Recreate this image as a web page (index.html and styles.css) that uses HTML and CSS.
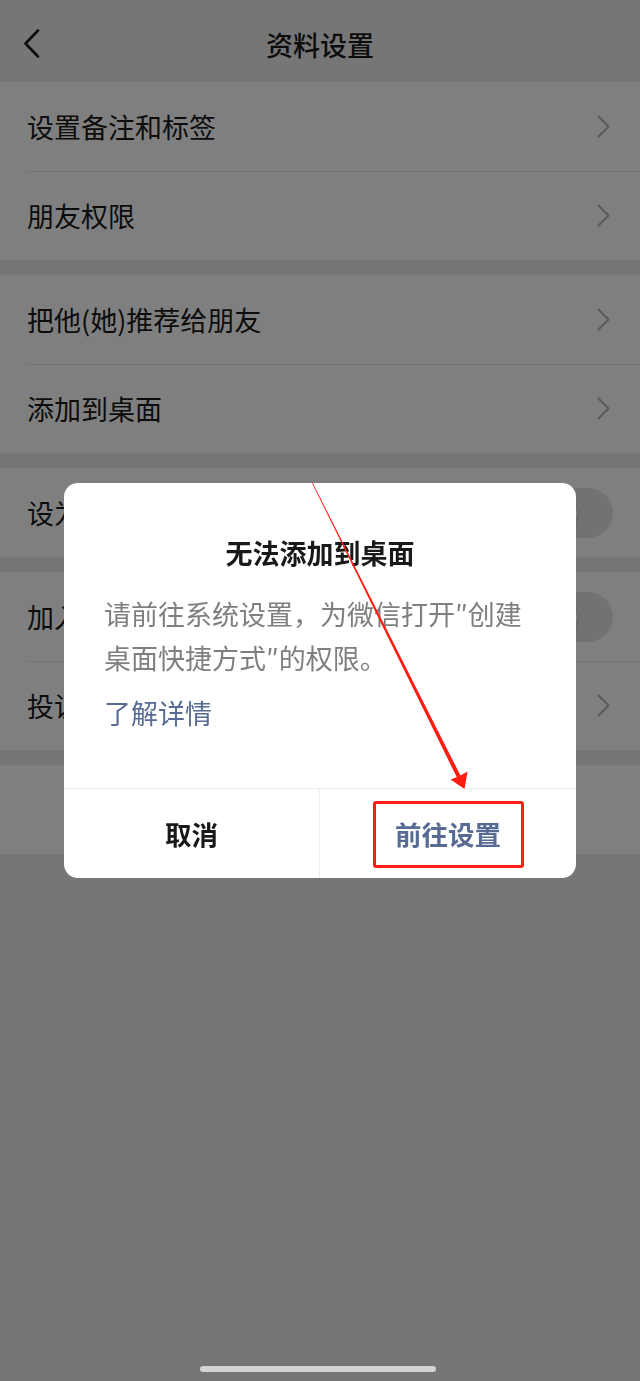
FILE: index.html
```html
<!DOCTYPE html>
<html lang="zh-CN">
<head>
<meta charset="utf-8">
<title>资料设置</title>
<link rel="stylesheet" href="styles.css">
</head>
<body>
<div class="page">
  <header class="nav">
    <svg class="nav-back" width="18" height="30" viewBox="0 0 18 30"><polyline points="15,1.5 2.5,14.5 15,27.5" fill="none" stroke="#191919" stroke-width="2.6" stroke-linecap="round" stroke-linejoin="round"/></svg>
    <h1 class="nav-title">资料设置</h1>
  </header>

  <section class="group">
    <div class="row"><span class="row-label">设置备注和标签</span><svg class="chev" width="13" height="23" viewBox="0 0 13 23"><polyline points="1.5,1.5 11.5,11.5 1.5,21.5"/></svg></div>
    <div class="row"><span class="row-label">朋友权限</span><svg class="chev" width="13" height="23" viewBox="0 0 13 23"><polyline points="1.5,1.5 11.5,11.5 1.5,21.5"/></svg></div>
  </section>

  <section class="group">
    <div class="row"><span class="row-label">把他(她)推荐给朋友</span><svg class="chev" width="13" height="23" viewBox="0 0 13 23"><polyline points="1.5,1.5 11.5,11.5 1.5,21.5"/></svg></div>
    <div class="row"><span class="row-label">添加到桌面</span><svg class="chev" width="13" height="23" viewBox="0 0 13 23"><polyline points="1.5,1.5 11.5,11.5 1.5,21.5"/></svg></div>
  </section>

  <section class="group">
    <div class="row"><span class="row-label">设为星标朋友</span><span class="switch"><span class="knob"></span></span></div>
  </section>

  <section class="group">
    <div class="row"><span class="row-label">加入黑名单</span><span class="switch"><span class="knob"></span></span></div>
    <div class="row"><span class="row-label">投诉</span><svg class="chev" width="13" height="23" viewBox="0 0 13 23"><polyline points="1.5,1.5 11.5,11.5 1.5,21.5"/></svg></div>
  </section>

  <section class="group">
    <div class="row row-danger"><span class="danger-label">删除</span></div>
  </section>
</div>

<div class="mask">
  <div class="dialog">
    <h2 class="dialog-title">无法添加到桌面</h2>
    <p class="dialog-text">请前往系统设置，为微信打开″创建桌面快捷方式″的权限。</p>
    <a class="dialog-link">了解详情</a>
    <div class="dialog-actions">
      <button class="btn btn-cancel">取消</button>
      <button class="btn btn-confirm">前往设置<span class="mark-box"></span></button>
    </div>
  </div>
</div>

<svg class="annot" width="640" height="1381" viewBox="0 0 640 1381">
  <polygon points="312.0,483 312.8,483 461.0,776.6 457.4,778.4" fill="#ff1c12"/>
  <polygon points="464.5,789 450.5,779.5 458.2,776.8 467.6,771.5" fill="#ff1c12"/>
</svg>

<div class="home-indicator"></div>
</body>
</html>
```

FILE: styles.css
```css
html, body {
  margin: 0;
  padding: 0;
}

body {
  width: 640px;
  height: 1381px;
  background: #ededed;
  font-family: "Noto Sans CJK SC", "Noto Sans", sans-serif;
  color: #191919;
  overflow: hidden;
}

.page {
  display: flex;
  flex-direction: column;
}

/* top navigation */
.nav {
  height: 82px;
  box-sizing: border-box;
  padding-top: 6px;
  display: flex;
  align-items: center;
  justify-content: center;
  position: relative;
  background: #ededed;
}

.nav-back {
  position: absolute;
  left: 23px;
  top: 29px;
}

.nav-title {
  margin: 0;
  font-size: 27px;
  font-weight: 500;
  line-height: 1;
}

/* list groups */
.group {
  background: #ffffff;
  margin-bottom: 15px;
}

.row {
  height: 89px;
  box-sizing: border-box;
  padding: 0 27px;
  display: flex;
  align-items: center;
  justify-content: space-between;
  position: relative;
}

.row + .row::before {
  content: "";
  position: absolute;
  left: 27px;
  right: 0;
  top: 0;
  height: 1px;
  background: #e6e6e6;
}

.row-label {
  font-size: 27px;
  line-height: 1;
}

.chev {
  display: block;
  margin-right: 3px;
}

.chev polyline {
  fill: none;
  stroke: #b2b2b2;
  stroke-width: 2;
  stroke-linecap: round;
  stroke-linejoin: round;
}

.switch {
  width: 84px;
  height: 50px;
  border-radius: 25px;
  background: #e5e5e5;
  position: relative;
  display: block;
}

.knob {
  position: absolute;
  left: 2px;
  top: 2px;
  width: 46px;
  height: 46px;
  border-radius: 50%;
  background: #ffffff;
  box-shadow: 0 2px 4px rgba(0, 0, 0, 0.15);
}

.row-danger {
  justify-content: center;
}

.danger-label {
  color: #fa5151;
  font-size: 27px;
  font-weight: 600;
}

/* modal */
.mask {
  position: fixed;
  inset: 0;
  background: rgba(0, 0, 0, 0.5);
  display: flex;
  justify-content: center;
  align-items: flex-start;
  padding-top: 483px;
  box-sizing: border-box;
}

.dialog {
  width: 512px;
  background: #ffffff;
  border-radius: 14px;
  display: flex;
  flex-direction: column;
  overflow: hidden;
}

.dialog-title {
  margin: 52px 0 0;
  font-size: 27px;
  font-weight: 700;
  line-height: 36px;
  text-align: center;
  color: #191919;
}

.dialog-text {
  margin: 21px 0 0;
  padding: 0 40px;
  font-size: 27px;
  line-height: 44px;
  color: #7f7f7f;
}

.dialog-link {
  margin: 11px 40px 53px;
  font-size: 27px;
  line-height: 44px;
  color: #576b95;
}

.dialog-actions {
  display: grid;
  grid-template-columns: 1fr 1fr;
  border-top: 1px solid #ececec;
  height: 90px;
  box-sizing: border-box;
}

.btn {
  border: 0;
  background: transparent;
  font-family: inherit;
  font-size: 26.5px;
  font-weight: 600;
  padding: 0;
  position: relative;
  display: flex;
  align-items: center;
  justify-content: center;
}

.btn-cancel {
  color: #191919;
  border-right: 1px solid #ececec;
}

.btn-confirm {
  color: #576b95;
}

.mark-box {
  position: absolute;
  left: 53px;
  top: 12px;
  width: 151px;
  height: 67px;
  box-sizing: border-box;
  border: 3px solid #ff1c12;
  border-radius: 3px;
}

.annot {
  position: fixed;
  left: 0;
  top: 0;
  pointer-events: none;
}

.home-indicator {
  position: fixed;
  left: 200px;
  bottom: 9px;
  width: 236px;
  height: 6px;
  border-radius: 3px;
  background: #d4d4d4;
}
```
